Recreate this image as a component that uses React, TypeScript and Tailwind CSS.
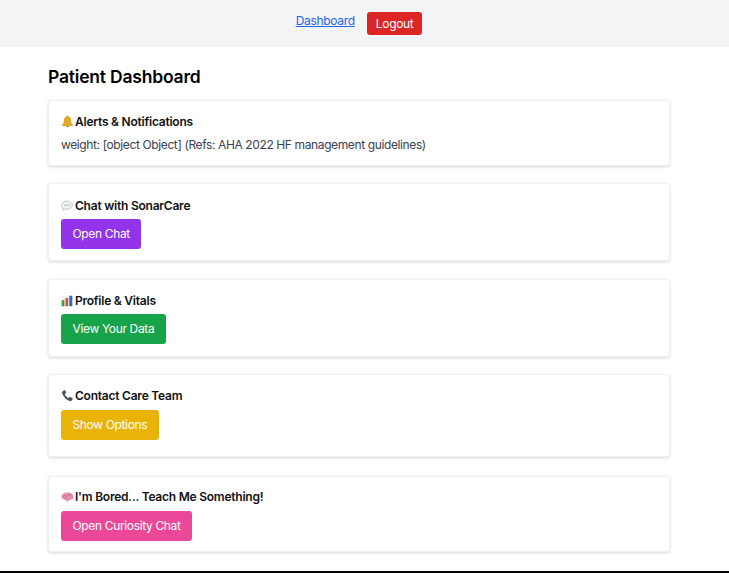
import type { ReactNode } from 'react'

const Bell = () => (
  <svg viewBox="0 0 16 16" className="w-[13px] h-[13px]">
    <path d="M8 .5c-.8 0-1.300.5-1.300 1.200C4.500 2.400 3.600 4.300 3.600 6.500c0 2.800-.9 4.400-2.600 6v1h14v-1c-1.700-1.600-2.600-3.200-2.600-6 0-2.200-.9-4.100-3.100-4.800C9.300 1 8.800.5 8 .5z" fill="#e0a92e" />
    <path d="M6.200 13.500a1.900 1.900 0 0 0 3.600 0z" fill="#8a6320" />
  </svg>
)

const Speech = () => (
  <svg viewBox="0 0 16 16" className="w-[12px] h-[12px]">
    <path d="M8 1.500C4 1.500 .8 3.800 .8 6.900c0 1.700.9 3 2.400 4l-.8 3 3.400-2c.6.200 1.400.3 2.200.3 4 0 7.200-2.300 7.200-5.300S12 1.500 8 1.500z" fill="#f1f2f3" stroke="#b4b8bc" strokeWidth="1" />
    <circle cx="5" cy="6.900" r=".8" fill="#8c9196" />
    <circle cx="8" cy="6.900" r=".8" fill="#8c9196" />
    <circle cx="11" cy="6.900" r=".8" fill="#8c9196" />
  </svg>
)

const Chart = () => (
  <svg viewBox="0 0 16 16" className="w-[12px] h-[12px]">
    <rect x="0" y="1" width="16" height="14" fill="#eef0f2" />
    <rect x="1" y="7" width="3.500" height="8" fill="#2f9e44" />
    <rect x="6" y="4" width="3.500" height="11" fill="#d9483b" />
    <rect x="11" y="1" width="4" height="14" fill="#2a6fb5" />
  </svg>
)

const Phone = () => (
  <svg viewBox="0 0 16 16" className="w-[13px] h-[13px]">
    <path d="M3.800 1.500 1.800 3c-.8.800-.5 2.800 1.200 5.400 1.800 2.800 4.500 5.400 7 6.200 1.300.4 2.500.2 3.100-.5l1.200-1.600c.3-.4.2-.8-.2-1.100l-2.600-1.700c-.4-.2-.7-.2-1 .1l-.9 1c-.3.300-.6.300-1 .1-1.600-1-3.100-2.800-3.800-4.200-.2-.4-.1-.7.200-.9l1.100-.8c.3-.3.400-.6.200-1L5 1.700c-.3-.4-.8-.5-1.200-.2z" fill="#4a5157" />
  </svg>
)

const Brain = () => (
  <svg viewBox="0 0 16 16" className="w-[13px] h-[13px]">
    <path d="M.5 8.500C.5 5.200 3.800 3 8 3s7.500 2.200 7.500 5.500c0 1.700-1.100 2.800-2.400 3-.6 1.200-2.200 1.400-3.200.6-1.100.7-2.700.7-3.600-.1-1.300.6-3 .2-3.700-.9C1.500 10.900.5 9.900.5 8.500z" fill="#e88fae" />
    <path d="M3 7.500c1.500-1 3-.6 4 .2M8.500 6c1.500-.5 3-.2 4.300.8M5 10c1-.8 2-.8 3 0" stroke="#b8527a" strokeWidth=".8" fill="none" />
    <path d="M6 12.200c1 .8 3 .8 4 0l-.5 1.600h-3z" fill="#a9968f" />
  </svg>
)

function Card({ icon, title, className, children }: { icon: ReactNode; title: string; className: string; children: ReactNode }) {
  return (
    <section className={`bg-white border border-[#f0f1f3] rounded-[3px] shadow-[0_1px_3px_rgba(0,0,0,0.16)] px-3 ${className}`}>
      <h2 className="flex items-center h-[17px] text-[12px] tracking-[-0.23px] font-semibold text-[#111]">
        <span className="w-[14px] shrink-0">{icon}</span>
        <span>{title}</span>
      </h2>
      {children}
    </section>
  )
}

function ActionButton({ label, className }: { label: string; className: string }) {
  return (
    <button className={`block h-[30px] px-[11.500px] rounded-[3px] text-white text-[12px] tracking-[-0.35px] ${className}`}>
      {label}
    </button>
  )
}

export default function App() {
  return (
    <div className="h-[573px] overflow-hidden flex flex-col bg-white font-['Inter',sans-serif]">
      <nav className="h-[47px] shrink-0 bg-[#f3f4f6] flex items-start justify-center gap-3 pt-3 pr-[11px]">
        <a href="#" className="text-[12px] tracking-[-0.3px] text-[#2563eb] underline">Dashboard</a>
        <button className="h-[23px] px-[9px] rounded-[3px] bg-[#dc2626] text-white text-[12px] tracking-[-0.35px]">Logout</button>
      </nav>

      <main className="flex-1 px-[48px] pr-[59px] pt-[19px]">
        <h1 className="text-[17.500px] leading-[22px] tracking-[-0.2px] font-semibold text-black">Patient Dashboard</h1>

        <Card icon={<Bell />} title="Alerts & Notifications" className="mt-[12px] h-[66px] pt-[12px]">
          <p className="mt-[6px] text-[12px] tracking-[-0.38px] leading-[17px] text-[#374151]">
            weight: [object Object] (Refs: AHA 2022 HF management guidelines)
          </p>
        </Card>

        <Card icon={<Speech />} title="Chat with SonarCare" className="mt-[17px] h-[78px] pt-[13px]">
          <ActionButton label="Open Chat" className="mt-[5px] bg-[#9333ea]" />
        </Card>

        <Card icon={<Chart />} title="Profile & Vitals" className="mt-[18px] h-[78px] pt-[12px]">
          <ActionButton label="View Your Data" className="mt-[5px] bg-[#16a34a]" />
        </Card>

        <Card icon={<Phone />} title="Contact Care Team" className="mt-[17px] h-[83px] pt-[12px]">
          <ActionButton label="Show Options" className="mt-[6px] bg-[#eab308]" />
        </Card>

        <Card icon={<Brain />} title="I'm Bored... Teach Me Something!" className="mt-[19px] h-[76px] pt-[11px]">
          <ActionButton label="Open Curiosity Chat" className="mt-[6px] bg-[#ec4899]" />
        </Card>
      </main>

      <div className="h-[2px] shrink-0 bg-black" />
    </div>
  )
}
